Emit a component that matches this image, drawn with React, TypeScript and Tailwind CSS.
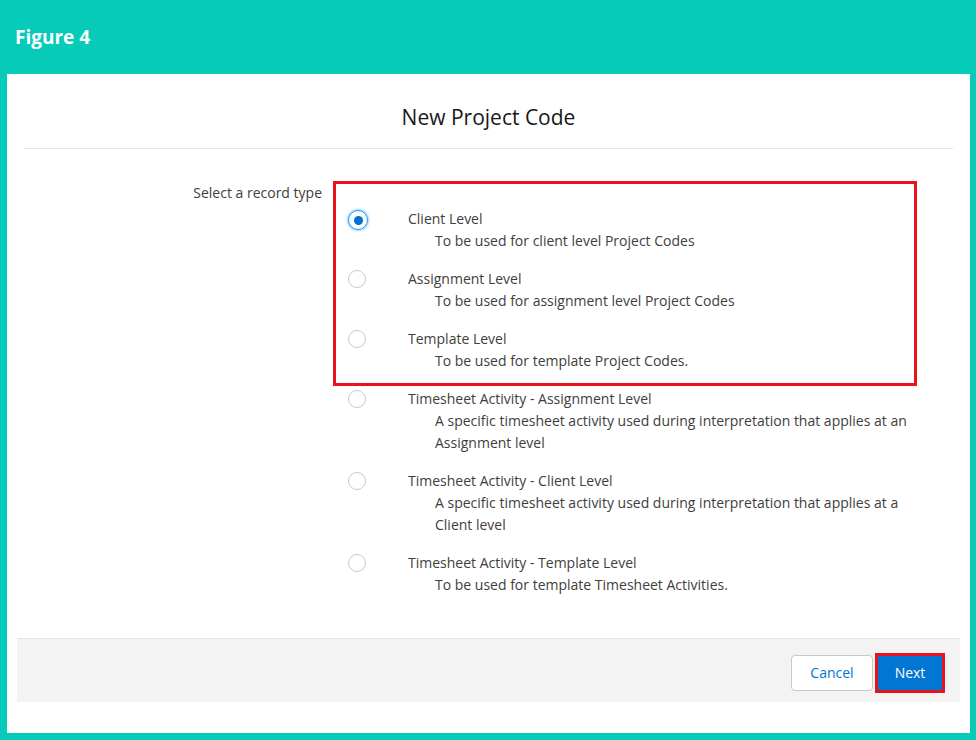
export default function App() {
  const items = [
    ["Client Level", "To be used for client level Project Codes"],
    ["Assignment Level", "To be used for assignment level Project Codes"],
    ["Template Level", "To be used for template Project Codes."],
    ["Timesheet Activity - Assignment Level", "A specific timesheet activity used during interpretation that applies at an Assignment level"],
    ["Timesheet Activity - Client Level", "A specific timesheet activity used during interpretation that applies at a Client level"],
    ["Timesheet Activity - Template Level", "To be used for template Timesheet Activities."],
  ];
  const Item = ({ i }: { i: number }) => (
    <div className="flex" style={{ height: i >= 3 && i < 5 ? 82 : 60 }}>
      <div className="w-[75px] pl-[15px] pt-[2px]">
        {i === 0 ? (
          <div className="w-[20px] h-[20px] rounded-full border border-[#1b96ff] shadow-[0_0_3px_#1b96ff] flex items-center justify-center">
            <div className="w-[9px] h-[9px] rounded-full bg-[#0070d2]" />
          </div>
        ) : (
          <div className="w-[18px] h-[18px] rounded-full border border-[#c9c9c9] bg-white" />
        )}
      </div>
      <div className="text-[14px] leading-[22px] text-[#3e3e3c]">
        <div>{items[i][0]}</div>
        <div className="pl-[27px] w-[530px]">{items[i][1]}</div>
      </div>
    </div>
  );
  return (
    <div className="w-[976px] h-[740px] bg-[#05cbb8] flex flex-col" style={{ fontFamily: '"Open Sans", sans-serif' }}>
      <div className="h-[74px] flex items-center pl-[15px] text-white font-bold text-[19px]">Figure 4</div>
      <div className="flex-1 ml-[7px] mr-[6px] mb-[7px] bg-white flex flex-col">
        <div className="h-[75px] pt-[14px] mx-[17px] border-b border-[#e5e5e5] flex items-center justify-center text-[21px] text-[#181818]">New Project Code</div>
        <div className="flex flex-1 pt-[33px]">
          <div className="w-[315px] text-right text-[14px] text-[#3e3e3c] leading-[22px]">Select a record type</div>
          <div className="ml-[11px] relative">
            <div className="absolute left-[0px] -top-[1px] w-[584px] h-[205px] border-[3px] border-[#e8141c] pointer-events-none" />
            <div className="pt-[26px]">
              {items.map((_, i) => <Item key={i} i={i} />)}
            </div>
          </div>
        </div>
        <div className="h-[64px] mx-[10px] mb-[31px] bg-[#f3f3f3] border-t border-[#e5e5e5] flex items-center justify-end pr-[15px] gap-[2px] pt-[4px]">
          <button className="h-[36px] w-[82px] rounded-[4px] border border-[#c9c9c9] bg-white text-[#0176d3] text-[14px]">Cancel</button>
          <div className="border-[3px] border-[#e8141c] p-0">
            <button className="h-[34px] w-[64px] bg-[#0176d3] text-white text-[14px]">Next</button>
          </div>
        </div>
      </div>
    </div>
  );
}
